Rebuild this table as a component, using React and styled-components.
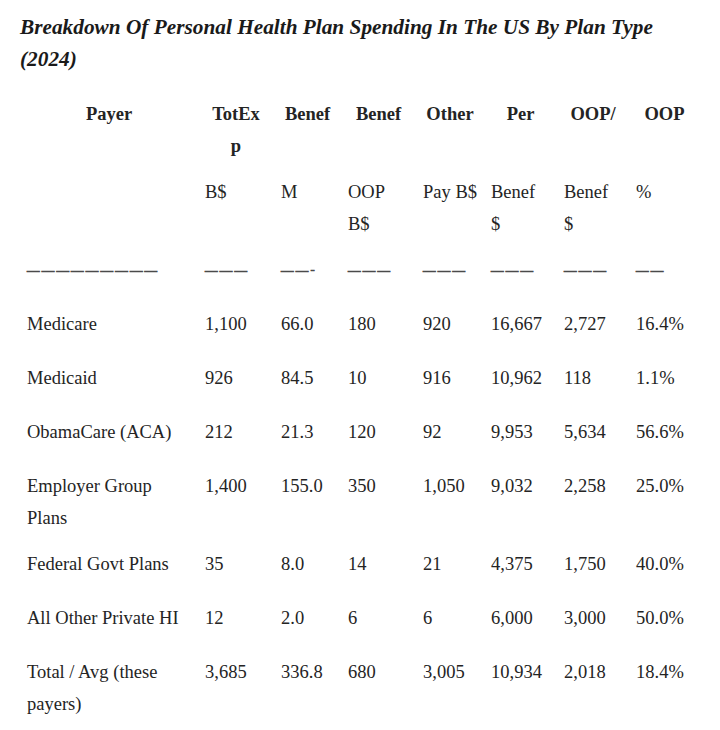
import styled, { createGlobalStyle } from "styled-components";

const GlobalStyle = createGlobalStyle`
  html, body {
    margin: 0;
    padding: 0;
    background: #fff;
  }
  body {
    font-family: "Liberation Serif", "Times New Roman", serif;
    color: #242424;
  }
`;

const Page = styled.div`
  width: 720px;
  padding: 11px 0 0 20px;
  box-sizing: border-box;
`;

const Title = styled.h2`
  width: 680px;
  margin: 0 0 11px 0;
  font-size: 21.3px;
  line-height: 32px;
  font-weight: bold;
  font-style: italic;
  color: #1a1a1a;
`;

const Table = styled.table`
  width: 680px;
  table-layout: fixed;
  border-collapse: collapse;
  border-spacing: 0;
  font-size: 18.5px;
  line-height: 32px;
`;

const Row = styled.tr`
  height: 54px;
`;

const Cell = styled.td`
  vertical-align: top;
  padding: 12px 7px 2px;
  text-align: left;
  white-space: ${(p) => (p.$nowrap ? "nowrap" : "normal")};
`;

const HeadCell = styled.th`
  vertical-align: top;
  padding: 12px 7px 2px;
  text-align: center;
  font-weight: bold;
  white-space: nowrap;
`;

const Dash = styled.span`
  font-size: 12.5px;
  letter-spacing: 2.2px;
  vertical-align: 3px;
  color: #4a4a4a;
  -webkit-text-stroke: 0.8px #4a4a4a;
`;

const widths = [178, 76, 67, 75, 68, 73, 72, 71];

const heads = [
  "Payer",
  <>TotEx<br />p</>,
  "Benef",
  "Benef",
  "Other",
  "Per",
  "OOP/",
  "OOP",
];

const units = [
  "",
  "B$",
  "M",
  <>OOP<br />B$</>,
  "Pay B$",
  <>Benef<br />$</>,
  <>Benef<br />$</>,
  "%",
];

const dashes = [
  "—————————",
  "———",
  "——-",
  "———",
  "———",
  "———",
  "———",
  "——",
];

const rows = [
  ["Medicare", "1,100", "66.0", "180", "920", "16,667", "2,727", "16.4%"],
  ["Medicaid", "926", "84.5", "10", "916", "10,962", "118", "1.1%"],
  ["ObamaCare (ACA)", "212", "21.3", "120", "92", "9,953", "5,634", "56.6%"],
  ["Employer Group Plans", "1,400", "155.0", "350", "1,050", "9,032", "2,258", "25.0%"],
  ["Federal Govt Plans", "35", "8.0", "14", "21", "4,375", "1,750", "40.0%"],
  ["All Other Private HI", "12", "2.0", "6", "6", "6,000", "3,000", "50.0%"],
  ["Total / Avg (these payers)", "3,685", "336.8", "680", "3,005", "10,934", "2,018", "18.4%"],
];

export default function App() {
  return (
    <>
      <GlobalStyle />
      <Page>
        <Title>
          Breakdown Of Personal Health Plan Spending In The US By Plan Type (2024)
        </Title>
        <Table>
          <colgroup>
            {widths.map((w, i) => (
              <col key={i} style={{ width: w }} />
            ))}
          </colgroup>
          <thead>
            <Row>
              {heads.map((h, i) => (
                <HeadCell key={i}>{h}</HeadCell>
              ))}
            </Row>
          </thead>
          <tbody>
            <Row>
              {units.map((u, i) => (
                <Cell key={i} $nowrap>
                  {u}
                </Cell>
              ))}
            </Row>
            <Row>
              {dashes.map((d, i) => (
                <Cell key={i} $nowrap>
                  <Dash>{d}</Dash>
                </Cell>
              ))}
            </Row>
            {rows.map((r, i) => (
              <Row key={i}>
                {r.map((c, j) => (
                  <Cell key={j} $nowrap={j > 0}>
                    {c}
                  </Cell>
                ))}
              </Row>
            ))}
          </tbody>
        </Table>
      </Page>
    </>
  );
}
